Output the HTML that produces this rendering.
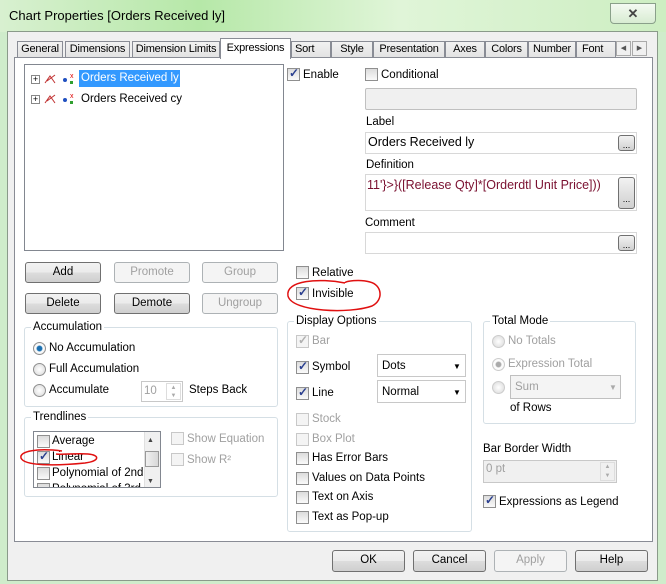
<!DOCTYPE html>
<html><head><meta charset="utf-8"><style>
*{margin:0;padding:0;box-sizing:border-box}
body{width:666px;height:584px;overflow:hidden;position:relative;font-family:"Liberation Sans",sans-serif;font-size:11.5px;color:#000;background:#cfeccb}
.a{position:absolute}
.t{position:absolute;white-space:nowrap;line-height:14px}
.tab{font-size:11px;letter-spacing:-0.2px}
.g{color:#a0a0a0}
.cb{position:absolute;width:13px;height:13px;border:1px solid #8f8f8f;background:linear-gradient(#dcdcdc,#fafafa)}
.cb.c::after{content:"✓";position:absolute;left:1px;top:-3px;font-size:12px;color:#2a3f8f;font-weight:bold}
.cb.d{border-color:#c8c8c8;background:#f4f4f4}
.cb.d.c::after{color:#b0b0b0}
.btn{position:absolute;border:1px solid #707070;border-radius:3px;background:linear-gradient(#f2f2f2 0,#ebebeb 50%,#dddddd 50%,#cfcfcf);text-align:center;line-height:19px}
.btn.dis{border-color:#adb2b5;background:#f4f4f4;color:#a0a0a0}
.box{position:absolute;border:1px solid #abadb3;background:#fff}
.grp{position:absolute;border:1px solid #d5dfe5;border-radius:3px}
.gl{position:absolute;background:#fff;padding:0 2px;line-height:14px}
.rad{position:absolute;width:13px;height:13px;border-radius:50%;border:1px solid #8f8f8f;background:radial-gradient(#fff,#d8d8d8)}
.dots{position:absolute;width:17px;height:16px;border:1px solid #707070;border-radius:3px;background:linear-gradient(#f2f2f2,#d0d0d0);font-size:9px;text-align:center;line-height:18px}
</style></head><body>
<div class="a" style="left:0;top:0;width:666px;height:32px;background:linear-gradient(90deg,#d8f0d0,#b6e8a8 30%,#e0f5d8 60%,#cdeec2)"></div>
<div class="t" style="left:9px;top:9px;font-size:13px">Chart Properties [Orders Received ly]</div>
<div class="a" style="left:610px;top:3px;width:46px;height:21px;border:1px solid #8aa08a;border-radius:0 0 4px 4px;background:linear-gradient(#f4faf2,#d8ecd2);text-align:center;font-size:13px;line-height:19px;color:#444;font-weight:bold">✕</div>
<div class="a" style="left:7px;top:31px;width:651px;height:550px;background:#f0f0f0;border:1px solid #8a9a8a"></div>
<!-- tabs -->
<div class="a" style="left:14px;top:57px;width:639px;height:485px;background:#fff;border:1px solid #898c95"></div>
<div class="t tab" style="left:17px;top:41px;width:46px;height:17px;border:1px solid #898c95;background:linear-gradient(#f2f2f2,#e3e3e3);text-align:center;line-height:15px">General</div>
<div class="t tab" style="left:65px;top:41px;width:65px;height:17px;border:1px solid #898c95;background:linear-gradient(#f2f2f2,#e3e3e3);text-align:center;line-height:15px">Dimensions</div>
<div class="t tab" style="left:132px;top:41px;width:88px;height:17px;border:1px solid #898c95;background:linear-gradient(#f2f2f2,#e3e3e3);text-align:center;line-height:15px">Dimension Limits</div>
<div class="t tab" style="left:220px;top:38px;width:71px;height:21px;border:1px solid #898c95;border-bottom:none;background:#fff;text-align:center;line-height:18px">Expressions</div>
<div class="t tab" style="left:291px;top:41px;width:40px;height:17px;border:1px solid #898c95;background:linear-gradient(#f2f2f2,#e3e3e3);line-height:15px;padding-left:3px">Sort</div>
<div class="t tab" style="left:331px;top:41px;width:42px;height:17px;border:1px solid #898c95;background:linear-gradient(#f2f2f2,#e3e3e3);text-align:center;line-height:15px">Style</div>
<div class="t tab" style="left:373px;top:41px;width:72px;height:17px;border:1px solid #898c95;background:linear-gradient(#f2f2f2,#e3e3e3);text-align:center;line-height:15px">Presentation</div>
<div class="t tab" style="left:445px;top:41px;width:40px;height:17px;border:1px solid #898c95;background:linear-gradient(#f2f2f2,#e3e3e3);text-align:center;line-height:15px">Axes</div>
<div class="t tab" style="left:485px;top:41px;width:43px;height:17px;border:1px solid #898c95;background:linear-gradient(#f2f2f2,#e3e3e3);text-align:center;line-height:15px">Colors</div>
<div class="t tab" style="left:528px;top:41px;width:48px;height:17px;border:1px solid #898c95;background:linear-gradient(#f2f2f2,#e3e3e3);text-align:center;line-height:15px">Number</div>
<div class="t tab" style="left:576px;top:41px;width:40px;height:17px;border:1px solid #898c95;background:linear-gradient(#f2f2f2,#e3e3e3);line-height:15px;padding-left:5px">Font</div>
<div class="a" style="left:616px;top:41px;width:15px;height:15px;border:1px solid #aaa;background:#f0f0f0;font-size:7px;text-align:center;line-height:13px;color:#555">◀</div>
<div class="a" style="left:632px;top:41px;width:15px;height:15px;border:1px solid #aaa;background:#f0f0f0;font-size:7px;text-align:center;line-height:13px;color:#555">▶</div>
<!-- list -->
<div class="box" style="left:24px;top:64px;width:260px;height:187px;border-color:#828790"></div>
<div class="a" style="left:31px;top:75px;width:9px;height:9px;border:1px solid #888;font-size:9px;line-height:7px;text-align:center">+</div>
<div class="a" style="left:31px;top:95px;width:9px;height:9px;border:1px solid #888;font-size:9px;line-height:7px;text-align:center">+</div>
<svg class="a" style="left:43px;top:71px" width="36" height="36"><path d="M2 12 L7 5 L12 12 M4 10 L12 4" stroke="#c03030" fill="none"/><circle cx="22" cy="9" r="2" fill="#2050c0"/><text x="27" y="7" font-size="7" fill="#d00">x</text><rect x="27" y="10" width="3" height="3" fill="#30a030"/>
<path d="M2 32 L7 25 L12 32 M4 30 L12 24" stroke="#c03030" fill="none"/><circle cx="22" cy="29" r="2" fill="#2050c0"/><text x="27" y="27" font-size="7" fill="#d00">x</text><rect x="27" y="30" width="3" height="3" fill="#30a030"/></svg>
<div class="t" style="left:79px;top:70px;width:101px;height:17px;background:#3399ff;color:#fff;line-height:17px;padding-left:2px">Orders Received ly</div>
<div class="t" style="left:81px;top:92px">Orders Received cy</div>
<!-- enable -->
<div class="cb c" style="left:287px;top:68px"></div><div class="t" style="left:303px;top:68px">Enable</div>
<div class="cb" style="left:365px;top:68px"></div><div class="t" style="left:381px;top:68px">Conditional</div>
<div class="a" style="left:365px;top:88px;width:272px;height:22px;border:1px solid #c0c0c0;border-radius:2px;background:#f0f0f0"></div>
<div class="t" style="left:366px;top:115px">Label</div>
<div class="box" style="left:365px;top:132px;width:272px;height:22px;border-color:#d8d8d8"></div>
<div class="t" style="left:368px;top:135px;font-size:12.5px">Orders Received ly</div>
<div class="dots" style="left:618px;top:135px">...</div>
<div class="t" style="left:366px;top:158px">Definition</div>
<div class="box" style="left:365px;top:174px;width:272px;height:37px;border-color:#d8d8d8"></div>
<div class="t" style="left:367px;top:178px;font-size:12.5px;color:#7a1030">11'}&gt;}([Release Qty]*[Orderdtl Unit Price]))</div>
<div class="dots" style="left:618px;top:177px;height:32px;line-height:42px">...</div>
<div class="t" style="left:365px;top:216px">Comment</div>
<div class="box" style="left:365px;top:232px;width:272px;height:22px;border-color:#d8d8d8"></div>
<div class="dots" style="left:618px;top:235px">...</div>
<!-- buttons -->
<div class="btn" style="left:25px;top:262px;width:76px;height:21px">Add</div>
<div class="btn dis" style="left:114px;top:262px;width:76px;height:21px">Promote</div>
<div class="btn dis" style="left:202px;top:262px;width:76px;height:21px">Group</div>
<div class="btn" style="left:25px;top:293px;width:76px;height:21px">Delete</div>
<div class="btn" style="left:114px;top:293px;width:76px;height:21px">Demote</div>
<div class="btn dis" style="left:202px;top:293px;width:76px;height:21px">Ungroup</div>
<!-- accumulation -->
<div class="grp" style="left:24px;top:327px;width:254px;height:80px"></div>
<div class="gl" style="left:31px;top:320px">Accumulation</div>
<div class="rad" style="left:33px;top:342px;background:radial-gradient(#1a6fb0 30%,#fff 45%,#ddd)"></div><div class="t" style="left:49px;top:341px">No Accumulation</div>
<div class="rad" style="left:33px;top:363px"></div><div class="t" style="left:49px;top:362px">Full Accumulation</div>
<div class="rad" style="left:33px;top:384px"></div><div class="t" style="left:49px;top:383px">Accumulate</div>
<div class="a" style="left:141px;top:381px;width:42px;height:21px;border:1px solid #c8c8c8;background:#fff"></div>
<div class="t g" style="left:144px;top:384px">10</div>
<div class="a" style="left:166px;top:383px;width:15px;height:17px;border:1px solid #ddd;font-size:6px;color:#aaa;text-align:center;line-height:8px">▲<br>▼</div>
<div class="t" style="left:189px;top:383px">Steps Back</div>
<!-- trendlines -->
<div class="grp" style="left:24px;top:417px;width:254px;height:80px"></div>
<div class="gl" style="left:31px;top:410px">Trendlines</div>
<div class="a" style="left:33px;top:431px;width:128px;height:57px;border:1px solid #828790;background:#fff;overflow:hidden">
<div class="cb" style="left:3px;top:3px"></div><div class="t" style="left:18px;top:2px">Average</div>
<div class="cb c" style="left:3px;top:19px"></div><div class="t" style="left:18px;top:18px">Linear</div>
<div class="cb" style="left:3px;top:35px"></div><div class="t" style="left:18px;top:34px">Polynomial of 2nd d</div>
<div class="cb" style="left:3px;top:51px"></div><div class="t" style="left:18px;top:50px">Polynomial of 3rd d</div>
<div class="a" style="left:110px;top:0;width:17px;height:56px;background:#f0f0f0;border-left:1px solid #e0e0e0"></div>
<div class="a" style="left:111px;top:19px;width:14px;height:16px;border:1px solid #999;background:linear-gradient(90deg,#f0f0f0,#d8d8d8)"></div>
<div class="t" style="left:113px;top:2px;font-size:7px;color:#444">▲</div><div class="t" style="left:113px;top:43px;font-size:7px;color:#444">▼</div>
</div>
<div class="cb d" style="left:171px;top:432px"></div><div class="t g" style="left:187px;top:432px">Show Equation</div>
<div class="cb d" style="left:171px;top:453px"></div><div class="t g" style="left:187px;top:453px">Show R²</div>
<!-- right -->
<div class="cb" style="left:296px;top:266px"></div><div class="t" style="left:312px;top:266px">Relative</div>
<div class="cb c" style="left:296px;top:287px"></div><div class="t" style="left:312px;top:287px">Invisible</div>
<div class="grp" style="left:287px;top:321px;width:185px;height:211px"></div>
<div class="gl" style="left:294px;top:314px">Display Options</div>
<div class="cb d c" style="left:296px;top:335px"></div><div class="t g" style="left:312px;top:334px">Bar</div>
<div class="cb c" style="left:296px;top:361px"></div><div class="t" style="left:312px;top:360px">Symbol</div>
<div class="a" style="left:377px;top:354px;width:89px;height:23px;border:1px solid #c8c8c8;background:#fff"></div><div class="t" style="left:382px;top:359px">Dots</div><div class="t" style="left:453px;top:360px;font-size:8px">▼</div>
<div class="cb c" style="left:296px;top:387px"></div><div class="t" style="left:312px;top:386px">Line</div>
<div class="a" style="left:377px;top:380px;width:89px;height:23px;border:1px solid #c8c8c8;background:#fff"></div><div class="t" style="left:382px;top:385px">Normal</div><div class="t" style="left:453px;top:386px;font-size:8px">▼</div>
<div class="cb d" style="left:296px;top:413px"></div><div class="t g" style="left:312px;top:412px">Stock</div>
<div class="cb d" style="left:296px;top:433px"></div><div class="t g" style="left:312px;top:432px">Box Plot</div>
<div class="cb" style="left:296px;top:452px"></div><div class="t" style="left:312px;top:451px">Has Error Bars</div>
<div class="cb" style="left:296px;top:472px"></div><div class="t" style="left:312px;top:471px">Values on Data Points</div>
<div class="cb" style="left:296px;top:491px"></div><div class="t" style="left:312px;top:490px">Text on Axis</div>
<div class="cb" style="left:296px;top:511px"></div><div class="t" style="left:312px;top:510px">Text as Pop-up</div>
<div class="grp" style="left:483px;top:321px;width:153px;height:103px"></div>
<div class="gl" style="left:490px;top:314px">Total Mode</div>
<div class="rad" style="left:492px;top:335px;border-color:#ccc"></div><div class="t g" style="left:508px;top:334px">No Totals</div>
<div class="rad" style="left:492px;top:358px;border-color:#ccc;background:radial-gradient(#aaa 30%,#fff 45%,#eee)"></div><div class="t g" style="left:508px;top:357px">Expression Total</div>
<div class="rad" style="left:492px;top:381px;border-color:#ccc"></div>
<div class="a" style="left:510px;top:375px;width:111px;height:24px;border:1px solid #c0c0c0;background:#f4f4f4"></div><div class="t g" style="left:515px;top:380px">Sum</div><div class="t" style="left:609px;top:381px;font-size:8px;color:#aaa">▼</div>
<div class="t" style="left:510px;top:401px">of Rows</div>
<div class="t" style="left:483px;top:442px">Bar Border Width</div>
<div class="a" style="left:483px;top:460px;width:134px;height:23px;border:1px solid #c8c8c8;background:#f0f0f0"></div>
<div class="t g" style="left:486px;top:462px">0 pt</div>
<div class="a" style="left:600px;top:462px;width:15px;height:19px;border:1px solid #ddd;font-size:6px;color:#aaa;text-align:center;line-height:9px">▲<br>▼</div>
<div class="cb c" style="left:483px;top:495px"></div><div class="t" style="left:499px;top:495px">Expressions as Legend</div>
<!-- bottom -->
<div class="btn" style="left:332px;top:550px;width:73px;height:22px">OK</div>
<div class="btn" style="left:413px;top:550px;width:73px;height:22px">Cancel</div>
<div class="btn dis" style="left:494px;top:550px;width:73px;height:22px">Apply</div>
<div class="btn" style="left:575px;top:550px;width:73px;height:22px">Help</div>
<!-- red marks -->
<svg class="a" style="left:0;top:0" width="666" height="584"><path d="M345 283 C320 278 285 280 288 296 C292 312 350 314 372 306 C384 300 382 285 370 282 C360 279 345 281 345 283" stroke="#e01010" stroke-width="1.5" fill="none"/>
<path d="M62 451 C38 448 19 451 21 458 C24 466 55 466 85 463 C100 461 100 455 88 454 C75 453 62 455 56 454" stroke="#e01010" stroke-width="1.5" fill="none"/></svg>
</body></html>
